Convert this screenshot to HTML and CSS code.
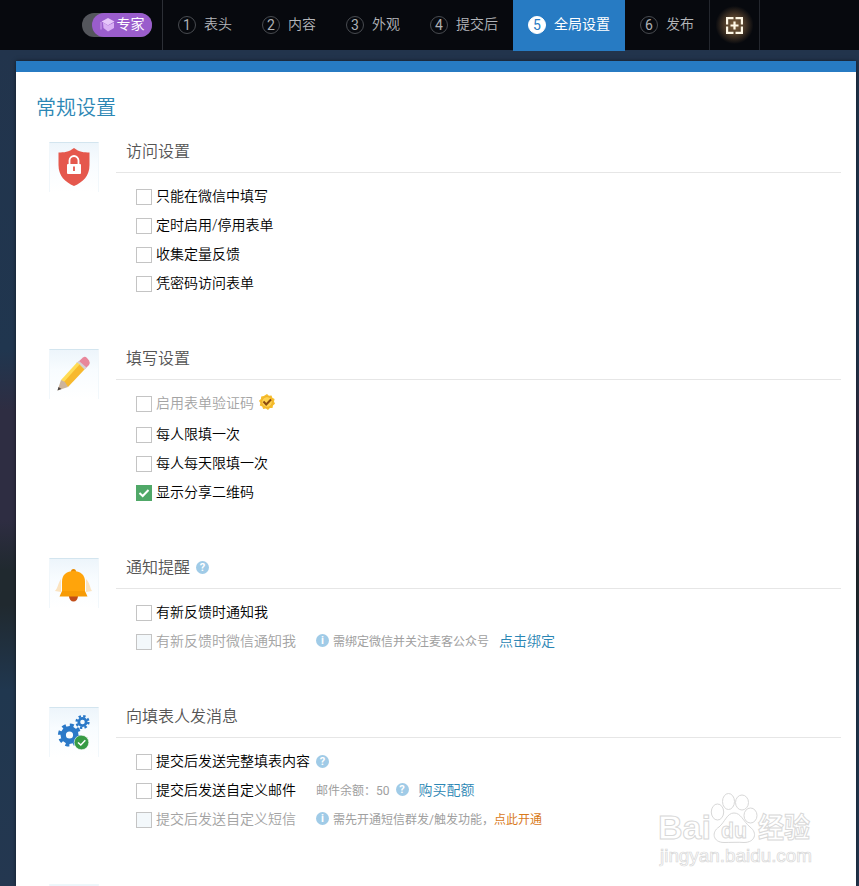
FILE: index.html
```html
<!DOCTYPE html>
<html lang="zh-CN">

<head>
    <meta charset="UTF-8">
    <meta name="viewport" content="width=device-width, initial-scale=1.0">
    <title>全局设置</title>
    <link rel="stylesheet" href="styles.css">
</head>

<body>
    <header class="topbar">
        <div class="mode">
            <div class="switch">
                <span class="switch-knob">
                    <svg width="15" height="14" viewBox="0 0 15 14">
                        <path d="M8 0L14.5 3.5L8 7.200L1.5 3.5Z" fill="#e6c6fa" />
                        <path d="M3 4.500L8 7.500L14 4.500V10L8 13.500L3.500 10Z" fill="#d9aff4" />
                        <path d="M1 4V11.500" stroke="#d3a5f1" fill="none" />
                    </svg>
                    专家
                </span>
            </div>
        </div>
        <nav class="steps">
            <a class="step"><span class="num">1</span>表头</a>
            <a class="step"><span class="num">2</span>内容</a>
            <a class="step"><span class="num">3</span>外观</a>
            <a class="step"><span class="num">4</span>提交后</a>
            <a class="step active"><span class="num">5</span>全局设置</a>
            <a class="step"><span class="num">6</span>发布</a>
        </nav>
        <div class="scan">
            <svg width="17" height="17" viewBox="0 0 17 17" fill="none" stroke="#fff8e6" stroke-width="2.200">
                <path d="M7.500 1.100H1.100V7.500M9.500 1.100H15.900V7.500M7.500 15.900H1.100V9.500M9.500 15.900H15.900V9.500" />
                <path d="M8.500 4.500V12.500M4.500 8.500H12.500" />
            </svg>
        </div>
    </header>

    <main class="panel">
        <h1>常规设置</h1>

        <section class="group">
            <div class="group-icon">
                <svg width="50" height="50" viewBox="0 0 50 50">
                    <path d="M25 5C20 9 15 9.500 9.500 9.500V22C9.500 33 16 39 25 43C34 39 40.500 33 40.500 22V9.500C35 9.500 30 9 25 5Z" fill="#e5584d" />
                    <path d="M20.500 22V17.500A4.500 4.500 0 0 1 29.500 17.500V22" fill="none" stroke="#fff" stroke-width="1.800" />
                    <rect x="18" y="21" width="14" height="10" rx="1" fill="#fff" />
                    <path d="M25 23.500V28" stroke="#e5584d" stroke-width="1.800" />
                </svg>
            </div>
            <div class="group-body">
                <h2>访问设置</h2>
                <ul>
                    <li><i class="box"></i>只能在微信中填写</li>
                    <li><i class="box"></i>定时启用/停用表单</li>
                    <li><i class="box"></i>收集定量反馈</li>
                    <li><i class="box"></i>凭密码访问表单</li>
                </ul>
            </div>
        </section>

        <section class="group">
            <div class="group-icon">
                <svg width="50" height="50" viewBox="0 0 50 50">
                    <path d="M29 12L34 7.500Q36 6 38 8L40 10.500Q41.500 13 40 15L36 19Z" fill="#e8879b" />
                    <path d="M27 13L30 11L37.500 17.500L35 20Z" fill="#d5d0d2" />
                    <path d="M12 30L28 12.500L31.500 15L15 34Z" fill="#ffdc55" />
                    <path d="M14 33L30.500 14.500L35.500 19.500L19 37Z" fill="#f7b92e" />
                    <path d="M12 30L8.500 40.500L19 37L16 32Z" fill="#cdb49b" />
                    <path d="M9.500 37L8.500 40.500L12.500 39Z" fill="#4c4644" />
                </svg>
            </div>
            <div class="group-body">
                <h2>填写设置</h2>
                <ul>
                    <li class="muted vip"><i class="box"></i>启用表单验证码
                        <svg class="badge" width="16" height="16" viewBox="0 0 16 16">
                            <path d="M8 0L9.900 1.700L12.500 1.400L13.300 3.800L15.600 5L15 7.500L16 9.800L14 11.400L13.500 14L10.900 14.100L9 16L6.800 14.600L4.200 15L3.200 12.600L0.800 11.500L1.300 9L0 6.800L1.900 5L2.200 2.400L4.800 2.100Z" fill="#f6bd2b" />
                            <circle cx="8" cy="8" r="5.300" fill="#ffd34e" stroke="#e9a829" stroke-width="0.700" />
                            <path d="M4.500 7.500L7.200 10.500L12 5.500" fill="none" stroke="#8c4b10" stroke-width="2" />
                        </svg>
                    </li>
                    <li><i class="box"></i>每人限填一次</li>
                    <li><i class="box"></i>每人每天限填一次</li>
                    <li><i class="box checked">
                            <svg width="16" height="16" viewBox="0 0 16 16">
                                <path d="M3.500 8L6.700 11L12.500 5" fill="none" stroke="#fff" stroke-width="2" />
                            </svg>
                        </i>显示分享二维码</li>
                </ul>
            </div>
        </section>

        <section class="group">
            <div class="group-icon">
                <svg width="50" height="50" viewBox="0 0 50 50">
                    <path d="M6 32C9 29 9 24 12 20V33ZM43 32C41 29 41 24 37 20V33Z" fill="#fbe3bf" />
                    <path d="M20 37H29A4.500 5.500 0 0 1 20 37Z" fill="#c14d18" />
                    <circle cx="24.500" cy="12.500" r="2.500" fill="#e88a00" />
                    <path d="M13 35V22.500C13 15.500 18 12 24.500 12S36 15.500 36 22.500V35Z" fill="#ffa40b" />
                    <path d="M13 32H36L38.500 37.500H10.500Z" fill="#f79b05" />
                </svg>
            </div>
            <div class="group-body">
                <h2>通知提醒<span class="tip">?</span></h2>
                <ul>
                    <li><i class="box"></i>有新反馈时通知我</li>
                    <li class="muted"><i class="box disabled"></i>有新反馈时微信通知我
                        <span class="hint"><span class="tip info">i</span>需绑定微信并关注麦客公众号</span>
                        <a class="link">点击绑定</a>
                    </li>
                </ul>
            </div>
        </section>

        <section class="group">
            <div class="group-icon">
                <svg width="50" height="50" viewBox="0 0 50 50">
                    <g fill="none" stroke="#2b79c8">
                        <circle cx="20.500" cy="27" r="6.300" stroke-width="5.400" />
                        <circle cx="20.500" cy="27" r="9.800" stroke-width="3.600" stroke-dasharray="3.900 3.800" />
                        <circle cx="33.500" cy="14" r="3.700" stroke-width="2.800" />
                        <circle cx="33.500" cy="14" r="5.900" stroke-width="2.400" stroke-dasharray="2.400 2.230" />
                    </g>
                    <circle cx="32.500" cy="34.500" r="7.300" fill="#379b45" stroke="#fff" stroke-width="0.600" />
                    <path d="M29 34.500L31.800 37L36.300 32.300" fill="none" stroke="#fff" stroke-width="1.500" />
                </svg>
            </div>
            <div class="group-body">
                <h2>向填表人发消息</h2>
                <ul>
                    <li><i class="box"></i>提交后发送完整填表内容<span class="tip">?</span></li>
                    <li><i class="box"></i>提交后发送自定义邮件
                        <span class="hint">邮件余额：50<span class="tip">?</span></span>
                        <a class="link">购买配额</a>
                    </li>
                    <li class="muted"><i class="box disabled"></i>提交后发送自定义短信
                        <span class="hint"><span class="tip info">i</span>需先开通短信群发/触发功能，</span>
                        <a class="link orange">点此开通</a>
                    </li>
                </ul>
            </div>
        </section>

        <section class="group">
            <div class="group-icon"></div>
        </section>
    </main>

    <div class="watermark">
        <svg width="160" height="76" viewBox="0 0 160 76" fill="#fff" stroke="#d8d8d8">
            <g class="brand">
                <text x="1" y="44" textLength="53" lengthAdjust="spacingAndGlyphs">Bai</text>
                <text class="cn" x="101" y="43" textLength="52" lengthAdjust="spacingAndGlyphs">经验</text>
            </g>
            <ellipse cx="60.500" cy="17" rx="6.200" ry="8" />
            <ellipse cx="71.500" cy="6.500" rx="6" ry="8" />
            <ellipse cx="85" cy="7.500" rx="6.500" ry="7.500" />
            <ellipse cx="93.500" cy="20.500" rx="6.500" ry="7.500" />
            <path d="M77 18C70 18 68 27 62 32C54 37 56 47.500 67 47.500C73 47.500 81 47 87 47.500C98 47.500 101 38 93 32C86 26 84 18 77 18Z" />
            <text class="du" x="64" y="43" textLength="26" lengthAdjust="spacingAndGlyphs">du</text>
            <text class="site" x="3" y="67" textLength="152" lengthAdjust="spacingAndGlyphs">jingyan.baidu.com</text>
        </svg>
    </div>
</body>

</html>
```
FILE: styles.css
```css
* {
    box-sizing: border-box;
}

body {
    margin: 0;
    height: 886px;
    overflow: hidden;
    font-family: Roboto, 'Noto Sans CJK SC', sans-serif;
    font-size: 14px;
    font-weight: 350;
    color: #000;
    background: linear-gradient(#22344c 50px, #20364f 350px, #2e2d42 410px, #2e2d42 520px, #20292f 570px, #20292f 605px, #20374f 690px, #243750 886px);
}

.topbar {
    display: flex;
    height: 50px;
    background: #07090e;
}

.mode {
    display: flex;
    align-items: center;
    justify-content: flex-end;
    width: 163px;
    padding-right: 10px;
    border-right: 1px solid #2c2f36;
}

.switch {
    display: flex;
    justify-content: flex-end;
    width: 70px;
    height: 24px;
    border-radius: 12px;
    background: #54565c;
}

.switch-knob {
    display: flex;
    align-items: center;
    justify-content: center;
    gap: 2px;
    width: 60px;
    height: 24px;
    padding-bottom: 4px;
    border-radius: 12px;
    background: #9a5dcc;
    color: #fff;
    font-weight: 400;
}

.switch-knob svg {
    margin-top: 3px;
}

.steps {
    display: flex;
}

.step {
    display: flex;
    align-items: center;
    gap: 8px;
    height: 50px;
    padding: 0 15px 4px;
    color: #b4b6ba;
    white-space: nowrap;
}

.num {
    display: flex;
    align-items: center;
    justify-content: center;
    width: 18px;
    height: 18px;
    margin-top: 3px;
    border: 1px solid #484b50;
    border-radius: 50%;
    color: #aeb1b5;
    font-weight: 400;
}

.step.active {
    height: 51px;
    padding-bottom: 5px;
    background: #277bc3;
    color: #fff;
    font-weight: 400;
}

.active .num {
    border-color: #fff;
    background: #fff;
    color: #277bc3;
}

.scan {
    display: flex;
    align-items: center;
    justify-content: center;
    width: 51px;
    border: solid #24272e;
    border-width: 0 1px;
    background: radial-gradient(circle at 50% 50%, #83643f 0, #4b3928 10px, #07090e 19px);
}

.panel {
    width: 840px;
    height: 825px;
    margin: 11px 0 0 16px;
    padding: 21px 15px 0 20px;
    border-top: 11px solid #277bc3;
    background: #fff;
    box-shadow: 0 0 4px rgba(0, 0, 0, 0.5);
    overflow: hidden;
}

h1 {
    margin: 0 0 19px;
    height: 30px;
    line-height: 30px;
    font-size: 20px;
    font-weight: 350;
    color: #2b86b4;
}

.group {
    display: flex;
    gap: 17px;
    padding-left: 13px;
}

.group:last-child {
    margin-top: -1px;
}

.group-icon {
    width: 50px;
    height: 50px;
    border: 1px solid #f1f7fb;
    border-width: 1px 1px 0;
    border-top-color: #d3e5ef;
    background: linear-gradient(#edf5fb, #f8fcff 20px, #fff);
}

.group:last-child .group-icon {
    border-top-color: #eef7fa;
}

.group-icon svg {
    display: block;
    margin-left: -1px;
}

.group-body {
    flex: 1;
    padding-bottom: 51px;
}

h2 {
    display: flex;
    align-items: center;
    margin: 0;
    height: 31px;
    padding: 0 0 15px 10px;
    border-bottom: 1px solid #e6e6e6;
    font-size: 16px;
    font-weight: 350;
    color: #555;
}

ul {
    margin: 0;
    padding: 9px 0 0 20px;
    list-style: none;
}

li {
    display: flex;
    align-items: center;
    height: 29px;
    padding-bottom: 4px;
}

.vip {
    height: 31px;
    padding-bottom: 6px;
}

.muted {
    color: #a3a3a3;
}

.box {
    width: 16px;
    height: 16px;
    margin: 5px 4px 0 0;
    border: 1px solid #c4c4c4;
    background: #fff;
}

.box.disabled {
    background: #f3f8fb;
}

.box.checked {
    border: 0;
    background: #50a868;
}

.box svg {
    display: block;
}

.badge {
    margin: 1px 0 0 5px;
}

.tip {
    display: flex;
    align-items: center;
    justify-content: center;
    width: 13px;
    height: 13px;
    margin: 3px 0 0 6px;
    border-radius: 50%;
    background: #a0cbe7;
    color: #fff;
    font-size: 11px;
    font-weight: 700;
}

.hint {
    display: flex;
    align-items: center;
    margin: 2px 0 0 20px;
    font-size: 12px;
    font-weight: 400;
    color: #a0a0a0;
}

.hint .tip {
    margin-top: 0;
}

.tip.info {
    margin: 0 4px 0 0;
}

.link {
    margin-left: 10px;
    color: #2b86b4;
}

.link.orange {
    margin: 2px 0 0;
    font-size: 12px;
    font-weight: 400;
    color: #d97a1c;
}

.watermark {
    position: absolute;
    left: 657px;
    top: 795px;
}

.watermark svg {
    display: block;
    overflow: visible;
}

.watermark text {
    font-family: 'Liberation Sans', sans-serif;
}

.brand {
    font-size: 34px;
    font-weight: 700;
}

.watermark .cn {
    font-family: 'Noto Sans CJK SC', sans-serif;
    font-size: 28px;
}

.watermark .du {
    font-size: 22px;
    font-weight: 700;
}

.watermark .site {
    font-size: 18px;
    stroke-width: 0.7;
}
```
